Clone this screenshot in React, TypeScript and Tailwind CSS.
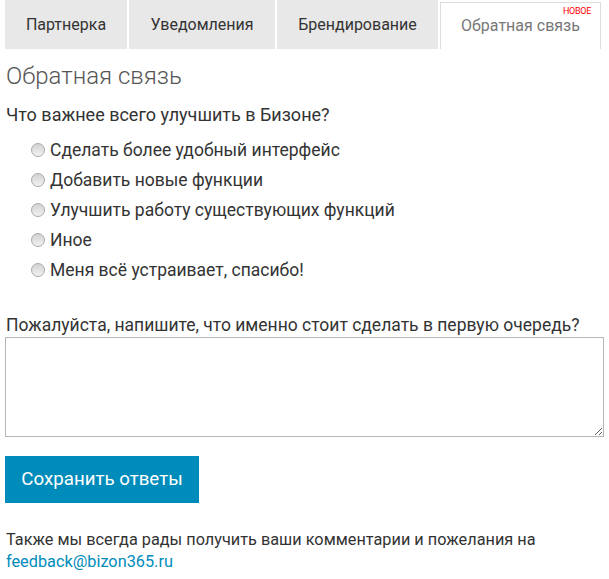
const tabs = [
  { label: "Партнерка", w: "w-[122px]" },
  { label: "Уведомления", w: "w-[146px]" },
  { label: "Брендирование", w: "w-[161px]" },
];

const options = [
  "Сделать более удобный интерфейс",
  "Добавить новые функции",
  "Улучшить работу существующих функций",
  "Иное",
  "Меня всё устраивает, спасибо!",
];

function Radio() {
  return (
    <span className="inline-block h-[14px] w-[14px] shrink-0 rounded-full border border-[#a9a9a9] bg-gradient-to-b from-[#d2d2d2] to-[#f2f2f2]" />
  );
}

export default function App() {
  return (
    <div className="min-h-[579px] w-[609px] bg-white font-['Roboto',sans-serif] text-[#333]">
      <div className="flex h-[49px] gap-[2px] pl-[5px]">
        {tabs.map((t) => (
          <div
            key={t.label}
            className={`flex h-full items-center justify-center bg-[#e8e8e8] text-[16px] text-[#333] ${t.w}`}
          >
            {t.label}
          </div>
        ))}
        <div className="relative mt-[2px] flex w-[161px] items-center justify-center border border-b-0 border-[#dddddd] bg-white text-[16px] text-[#777]">
          Обратная связь
          <span className="absolute right-[9px] top-[2px] text-[9px] tracking-[-0.3px] text-[#ff0000]">НОВОЕ</span>
        </div>
      </div>

      <div className="px-[5px]">
        <h2 className="mt-[11px] pl-[1px] text-[24px] font-light leading-[32px] text-[#555]">Обратная связь</h2>
        <p className="mt-[11px] pl-[1px] text-[18px] leading-[24px]">Что важнее всего улучшить в Бизоне?</p>
        <div className="mt-[8px] flex flex-col pl-[26px]">
          {options.map((o) => (
            <label key={o} className="flex h-[30px] items-center gap-[5px] text-[17.5px]">
              <Radio />
              {o}
            </label>
          ))}
        </div>

        <p className="mt-[28px] pl-[1px] text-[17.5px] leading-[24px]">
          Пожалуйста, напишите, что именно стоит сделать в первую очередь?
        </p>
        <textarea className="block h-[100px] w-full border border-[#b5b5b5] bg-white" />

        <button className="mt-[19px] h-[47px] w-[194px] bg-[#008cba] text-[18.7px] text-white">
          Сохранить ответы
        </button>

        <p className="mt-[26px] pl-[1px] text-[16.3px] leading-[22px]">
          Также мы всегда рады получить ваши комментарии и пожелания на
          <br />
          <a className="text-[#008cba]">feedback@bizon365.ru</a>
        </p>
      </div>
    </div>
  );
}
